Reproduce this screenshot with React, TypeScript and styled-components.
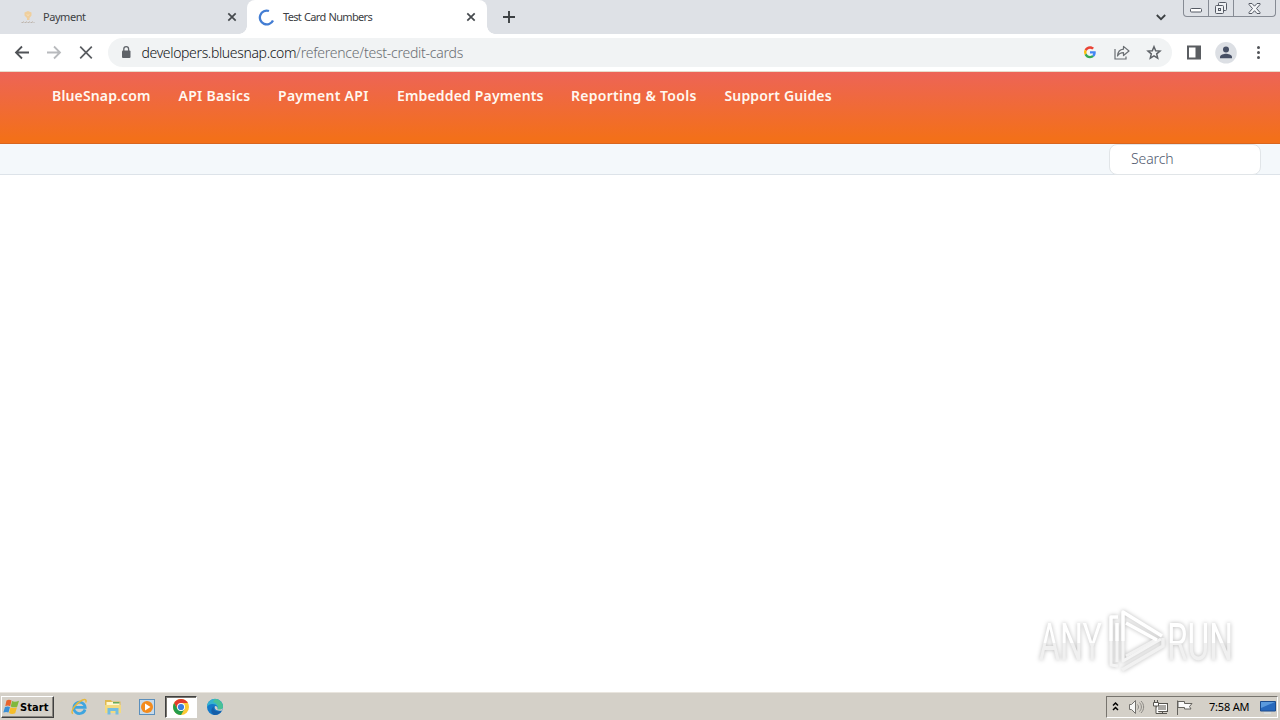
import React from 'react';
import styled, { createGlobalStyle } from 'styled-components';

const GlobalStyle = createGlobalStyle`
  * {
    box-sizing: border-box;
  }
  body {
    margin: 0;
    overflow: hidden;
    background: #fff;
    font-family: 'Noto Sans', 'Open Sans', sans-serif;
  }
  svg {
    display: block;
    flex: none;
  }
`;

const SScreen = styled.div`
  width: 1280px;
  height: 720px;
  display: flex;
  flex-direction: column;
  overflow: hidden;
`;

const STabStrip = styled.div`
  height: 34px;
  display: flex;
  align-items: stretch;
  background: #dee1e6;
`;

const STab = styled.div<{ $active?: boolean }>`
  position: relative;
  width: ${({ $active }) => ($active ? '240px' : '247px')};
  padding: ${({ $active }) => ($active ? '0 11px' : '0 10px 0 20px')};
  display: flex;
  align-items: center;
  border-radius: 8px 8px 0 0;
  background: ${({ $active }) => ($active ? '#fff' : 'transparent')};
  &::before,
  &::after {
    content: '';
    display: ${({ $active }) => ($active ? 'block' : 'none')};
    position: absolute;
    bottom: 0;
    width: 8px;
    height: 8px;
  }
  &::before {
    left: -8px;
    background: radial-gradient(circle at 0 0, transparent 7.5px, #fff 8px);
  }
  &::after {
    right: -8px;
    background: radial-gradient(circle at 100% 0, transparent 7.5px, #fff 8px);
  }
`;

const STabTitle = styled.span<{ $spacing: number; $left: number }>`
  flex: 1;
  margin-left: ${({ $left }) => $left}px;
  font-size: 11px;
  line-height: 16px;
  letter-spacing: ${({ $spacing }) => $spacing}px;
  word-spacing: 0.8px;
  color: #3c4043;
  white-space: nowrap;
`;

const SNewTab = styled.div`
  width: 44px;
  display: flex;
  align-items: center;
  justify-content: center;
`;

const SStripEnd = styled.div`
  margin-left: auto;
  display: flex;
`;

const STabSearch = styled.div`
  width: 28px;
  padding: 14px 0 0 1px;
`;

const SWindowButtons = styled.div`
  display: flex;
  width: 93px;
  height: 17px;
  margin-right: 4px;
  border: 1px solid #868b94;
  border-top: none;
  border-radius: 0 0 4px 4px;
`;

const SWindowButton = styled.div<{ $width: number }>`
  width: ${({ $width }) => $width}px;
  display: flex;
  align-items: center;
  justify-content: center;
  border-right: 1px solid #868b94;
  &:last-child {
    border-right: none;
  }
`;

const SToolbar = styled.div`
  height: 38px;
  display: flex;
  align-items: center;
  padding-left: 14px;
  border-bottom: 1px solid #e8dccb;
  background: #fff;
`;

const SNavIcons = styled.div`
  width: 94px;
  display: flex;
  gap: 16px;
`;

const SOmnibox = styled.div`
  width: 1064px;
  height: 29px;
  display: flex;
  align-items: center;
  padding: 0 9px 0 12px;
  border-radius: 15px;
  background: #f1f3f4;
`;

const SUrl = styled.div`
  flex: 1;
  margin-left: 9.5px;
  font-size: 14px;
  font-weight: 300;
  line-height: 20px;
  color: #6a6e73;
  letter-spacing: -0.24px;
  white-space: nowrap;
`;

const SHost = styled.span`
  letter-spacing: -0.35px;
  color: #111316;
`;

const SOmniboxActions = styled.div`
  display: flex;
  align-items: center;
  gap: 14px;
`;

const SToolbarEnd = styled.div`
  display: flex;
  align-items: center;
  margin-left: 14px;
  gap: 13px;
`;

const SHeader = styled.header`
  height: 72px;
  padding: 14px 0 0 52px;
  background: linear-gradient(#ed6457, #f37019 94%);
  border-bottom: 1px solid #d8661f;
`;

const SHeaderNav = styled.nav`
  display: flex;
`;

const SHeaderLink = styled.a<{ $width: number; $spacing: number }>`
  width: ${({ $width }) => $width}px;
  font-size: 14px;
  font-weight: 600;
  line-height: 20px;
  letter-spacing: ${({ $spacing }) => $spacing}px;
  color: #fff8f0;
  white-space: nowrap;
`;

const SSubHeader = styled.div`
  height: 31px;
  display: flex;
  justify-content: flex-end;
  padding-right: 19px;
  border-bottom: 1px solid #dde3e9;
  background: #f4f8fb;
`;

const SSearch = styled.div`
  width: 152px;
  height: 31px;
  padding: 4px 0 0 21px;
  border: 1px solid #e1e5e8;
  border-radius: 8px;
  background: #fff;
  font-size: 14px;
  font-weight: 300;
  line-height: 20px;
  letter-spacing: -0.1px;
  color: #4f586e;
`;

const SContent = styled.main`
  flex: 1;
  display: flex;
  align-items: flex-end;
  justify-content: flex-end;
  padding: 0 44px 19px 0;
  background: #fff;
`;

const SWatermark = styled.div`
  display: grid;
  grid-template-columns: 68px 60px 69px;
  align-items: center;
  height: 64px;
  filter: drop-shadow(0 0 2px rgba(0, 0, 0, 0.28));
`;

const SWatermarkText = styled.span<{ $scale: number }>`
  width: max-content;
  margin-top: 4px;
  font-family: Roboto, sans-serif;
  font-size: 51px;
  line-height: 60px;
  color: transparent;
  background: linear-gradient(#fff 50%, #f0f0f0 50%);
  background-clip: text;
  white-space: nowrap;
  transform: scaleX(${({ $scale }) => $scale});
  transform-origin: left;
`;

const STaskbar = styled.footer`
  height: 28px;
  display: flex;
  align-items: center;
  padding: 1px 2px 0 1px;
  border-top: 1px solid #e9e5de;
  background: #d4d0c8;
`;

const SStart = styled.button`
  width: 53px;
  height: 22px;
  display: flex;
  align-items: center;
  padding: 0 1px;
  border: 1px solid;
  border-color: #fff #404040 #404040 #fff;
  box-shadow: inset -1px -1px #88857f;
  background: #d4d0c8;
  font-family: 'DejaVu Sans Condensed', 'DejaVu Sans', sans-serif;
  font-size: 11px;
  font-weight: 700;
  letter-spacing: 0.1px;
  color: #000;
`;

const SQuickLaunch = styled.div`
  display: flex;
  margin-left: 8px;
`;

const STask = styled.div<{ $active?: boolean }>`
  width: ${({ $active }) => ($active ? '32px' : '34px')};
  margin: ${({ $active }) => ($active ? '0 1px' : '0')};
  height: 22px;
  display: flex;
  align-items: center;
  justify-content: center;
  border: ${({ $active }) => ($active ? '1px solid' : 'none')};
  border-color: #404040 #fff #fff #404040;
  box-shadow: ${({ $active }) => ($active ? 'inset 1px 1px #77746e' : 'none')};
  background: ${({ $active }) => ($active ? '#fff' : 'transparent')};
`;

const STray = styled.div`
  width: 172px;
  height: 22px;
  display: flex;
  align-items: center;
  margin-left: auto;
  padding: 0 0 0 5px;
  border: 1px solid;
  border-color: #77746e #fff #fff #77746e;
`;

const STrayIcons = styled.div`
  width: 97px;
  display: flex;
  align-items: center;
  gap: 7px;
`;

const SClock = styled.span`
  width: 51px;
  font-size: 11px;
  line-height: 16px;
  letter-spacing: -0.2px;
  color: #000;
  white-space: nowrap;
`;

const CloseIcon = () => (
  <svg width="10" height="10" viewBox="0 0 10 10">
    <path d="M1.3 1.3 8.7 8.7M8.7 1.3 1.3 8.7" stroke="#45494d" strokeWidth="1.7" />
  </svg>
);

const FaviconIcon = () => (
  <svg width="16" height="16" viewBox="0 0 16 16">
    <path d="M4.500 3.500 8 2l3.500 1.500v3L9.500 9v2H7V9L4.500 6.500Z" fill="#efcf9e" />
    <path d="M7 5.500 8 6.500l1-1" stroke="#fae9cd" fill="none" />
    <path d="M1.500 13.500h13" stroke="#bdb5ae" strokeDasharray="2 1" />
    <path d="M3 12.500h10" stroke="#cfc8c2" strokeDasharray="1 2" />
  </svg>
);

const Spinner = () => (
  <svg width="17" height="17" viewBox="0 0 17 17">
    <path
      d="M11 2A6.900 6.900 0 1 0 15 11.500"
      fill="none"
      stroke="#437dd3"
      strokeWidth="2.300"
    />
  </svg>
);

const ArrowIcon = ({
  color,
  flip = false,
}: {
  readonly color: string;
  readonly flip?: boolean;
}) => (
  <svg width="16" height="16" viewBox="0 0 16 16">
    <path
      d="M15 7.500H2M8 1.500l-6 6 6 6"
      fill="none"
      stroke={color}
      strokeWidth="1.800"
      transform={flip ? 'matrix(-1 0 0 1 16 0)' : undefined}
    />
  </svg>
);

const StopIcon = () => (
  <svg width="16" height="16" viewBox="0 0 16 16">
    <path d="m2.2 1.700 11.600 11.600m0-11.600L2.2 13.300" stroke="#5a5d61" strokeWidth="1.700" />
  </svg>
);

const LockIcon = () => (
  <svg width="12" height="14" viewBox="0 0 12 14">
    <rect x="2" y="4.500" width="8.500" height="7.500" rx="1" fill="#5f6368" />
    <path d="M3.800 5.500V3.100a2.400 2.400 0 0 1 4.800 0V5.500" fill="none" stroke="#5f6368" strokeWidth="1.300" />
  </svg>
);

const GoogleIcon = () => (
  <svg width="18" height="18" viewBox="-12 -9 72 72">
    <path fill="#EA4335" d="M24 9.5c3.5 0 6.700 1.200 9.200 3.600l6.900-6.900C35.900 2.400 30.500 0 24 0 14.600 0 6.500 5.400 2.600 13.200l8 6.200C12.400 13.700 17.700 9.500 24 9.500z" />
    <path fill="#4285F4" d="M47 24.600c0-1.600-.2-3.100-.4-4.600H24v9h12.900c-.6 3-2.300 5.500-4.800 7.200l7.700 6C44.400 38 47 32 47 24.600z" />
    <path fill="#FBBC05" d="M10.500 28.600A14.500 14.500 0 0 1 10.500 19.400l-8-6.200a24 24 0 0 0 0 21.600z" />
    <path fill="#34A853" d="M24 48c6.500 0 11.900-2.100 15.900-5.800l-7.700-6c-2.200 1.500-4.900 2.300-8.200 2.300-6.300 0-11.600-4.200-13.500-9.900l-8 6.200C6.500 42.600 14.600 48 24 48z" />
  </svg>
);

const ShareIcon = () => (
  <svg width="18" height="16" viewBox="0 0 18 16">
    <path d="M2 4v10h11v-2.500" fill="none" stroke="#6b6f73" strokeWidth="1.200" />
    <path
      d="M10.500 4.200V1.400L16 6l-5.500 4.500V7.700C7.700 7.700 5.900 8.500 4.500 11c.3-4 2.500-6.500 6-6.800Z"
      fill="none"
      stroke="#6b6f73"
      strokeWidth="1.200"
      strokeLinejoin="round"
    />
  </svg>
);

const StarIcon = () => (
  <svg width="18" height="18" viewBox="0 0 18 18">
    <path
      d="m9 2.700 1.700 4 4.300.4-3.300 2.800 1 4.300L9 11.900l-3.700 2.300 1-4.300L3 7.100l4.300-.4Z"
      fill="none"
      stroke="#5f6368"
      strokeWidth="1.500"
    />
  </svg>
);

const SidePanelIcon = () => (
  <svg width="16" height="16" viewBox="0 0 16 16">
    <path d="M1 .5h14v14H1zM3 2.500v10h6.500v-10z" fill="#5a5d61" fillRule="evenodd" />
  </svg>
);

const AvatarIcon = () => (
  <svg width="22" height="22" viewBox="0 0 22 22">
    <circle cx="11" cy="10.800" r="10.800" fill="#dcdfe4" />
    <circle cx="11" cy="7.500" r="3" fill="#464f64" />
    <path d="M5 16.200v-1.300c0-2 4-3.200 6-3.200s6 1.200 6 3.200v1.300Z" fill="#464f64" />
  </svg>
);

const MenuIcon = () => (
  <svg width="20" height="16" viewBox="0 0 20 16">
    {[2.5, 7.5, 12.5].map((y) => (
      <circle key={y} cx="8.500" cy={y} r="1.500" fill="#505357" />
    ))}
  </svg>
);

const PlayLogo = () => (
  <svg width="60" height="64" viewBox="0 0 60 64">
    <g fill="none" strokeLinejoin="round">
      <path d="M15 61 56 37v-8" stroke="#f1f1f1" strokeWidth="3.500" />
      <path d="M19 47 48 31" stroke="#f1f1f1" strokeWidth="3" />
      <path d="M10 32v21M4 32v24l7 1M16 32v20l38-22" stroke="#f4f4f4" strokeWidth="3" />
      <path d="M11 8H4v24M10 14v18M16 32V3l39 24M19 14l31 17" stroke="#fff" strokeWidth="3.500" />
    </g>
  </svg>
);

const WindowsIcon = () => (
  <svg width="17" height="17" viewBox="0 0 17 17">
    <path d="M3.500 1.500c2-1 3.500-.8 5 .1L7.200 7.200c-1.600-.9-3-.9-4.900-.1Z" fill="#e8632c" />
    <path d="M9.100 2c1.800 1 3.900 1 6.900-.3l-1.800 6c-2.400.9-4.400.9-6.500-.3Z" fill="#80b83d" />
    <path d="M2 8c2-.8 3.500-.8 5 .1l-1.500 5.500c-1.500-.9-3-.9-5.200 0Z" fill="#398fd6" />
    <path d="M7.500 8.300c1.800 1 4 1 6.500 0l-1.800 6c-2.300 1-4.400.9-6.200-.3Z" fill="#f5bd2a" />
  </svg>
);

const ExplorerIcon = () => (
  <svg width="18" height="18" viewBox="0 0 18 18">
    <path
      d="M15 11.500A5.700 5.700 0 1 1 15.200 9.300H5"
      fill="none"
      stroke="#3fa5df"
      strokeWidth="2.700"
    />
    <path d="M2.800 15.800C-.2 13 6.500 4.500 12.500 2c3-1.200 4.300 0 3.200 2.500" fill="none" stroke="#e6b83c" strokeWidth="1.400" />
  </svg>
);

const FolderIcon = () => (
  <svg width="18" height="18" viewBox="0 0 18 18">
    <path d="M1 2h6l1 1.500h8.500V15H1Z" fill="#dfb950" />
    <path d="M2.500 4h13v4h-13Z" fill="#fff7cf" />
    <path d="M9 4h6.500v1.500H9Z" fill="#67a95b" />
    <path d="M1 7h16v8H1Z" fill="#f3da80" />
    <path d="M3.500 16.500V10h11v6.500h-3V13h-5v3.500Z" fill="#74bde0" />
  </svg>
);

const MediaIcon = () => (
  <svg width="16" height="16" viewBox="0 0 16 16">
    <rect x=".5" y=".5" width="15" height="15" fill="#c7daea" stroke="#5b8fbc" />
    <circle cx="8" cy="8" r="6" fill="#f38b1d" />
    <path d="M6 4.500 11.500 8 6 11.500Z" fill="#fff" />
  </svg>
);

const ChromeIcon = () => (
  <svg width="16" height="16" viewBox="0 0 16 16">
    <circle cx="8" cy="8" r="8" fill="#fcc934" />
    <path d="M1.100 4A8 8 0 0 1 14.900 4H8L4.500 10Z" fill="#e33b2e" />
    <path d="M1.100 4A8 8 0 0 0 8 16l3.500-6h-7Z" fill="#249c4b" />
    <circle cx="8" cy="8" r="4" fill="#fff" />
    <circle cx="8" cy="8" r="3.100" fill="#3b7de0" />
  </svg>
);

const EdgeIcon = () => (
  <svg width="18" height="18" viewBox="0 0 18 18">
    <circle cx="9" cy="9" r="8" fill="#1479c9" />
    <path d="M1 9a8 8 0 0 1 16-.5c0 3-2.500 3.800-5.500 3.200C13 9 10 5.800 6.500 6 4 6 2 7 1 9Z" fill="#35b3cf" />
    <path d="M9 1a8 8 0 0 1 8 7.500c0 3-2.500 3.800-5.500 3.200C13 8 11 5 7 4Z" fill="#55c978" opacity=".65" />
    <path d="M8 8.500c-1.500 3 1.500 6 7.500 4.500-2 3.500-5 4-7.500 4-3-1.500-4-6.500 0-8.500Z" fill="#155da8" />
    <path d="M9 8c-1.200 3 1.500 5.500 7 4.500l1-2.500c-1.500 1.500-4 2-5.500 1.200.6-1.700-.5-3.200-2.500-3.200Z" fill="#d4d0c8" />
  </svg>
);

const TrayChevrons = () => (
  <svg width="8" height="12" viewBox="0 0 8 12">
    <path d="m1 4.500 2.500-2.500L6 4.500M1 9l2.500-2.500L6 9" fill="none" stroke="#000" strokeWidth="1.500" />
  </svg>
);

const VolumeIcon = () => (
  <svg width="18" height="16" viewBox="0 0 18 16">
    <path d="M2.500 5.500h2l4-4v13l-4-4h-2Z" fill="#f7f7f5" stroke="#73716d" />
    <path d="M10.500 5.500c1.300 1.500 1.300 3.500 0 5M12.500 3.500c2.500 2.700 2.500 6.300 0 9M14 2c3.500 3.500 3.500 8.500 0 12" fill="none" stroke="#8b8984" />
  </svg>
);

const NetworkIcon = () => (
  <svg width="17" height="17" viewBox="0 0 17 17">
    <rect x="4.500" y="4.500" width="11" height="8" fill="#aaa8a4" stroke="#56544f" />
    <path d="M5.500 5.500h9v6h-9z" fill="none" stroke="#fff" />
    <path d="M6 14.500h9M10.500 13v2" stroke="#56544f" />
    <path d="M1.500 3.500h5V7h-5zM2.500 1v2M5.500 1v2M4 7v7.500h3" fill="#fff" stroke="#56544f" />
  </svg>
);

const FlagIcon = () => (
  <svg width="17" height="17" viewBox="0 0 17 17">
    <path d="M1.500 16V1.500M2 2.500h6.500v2H16l-2.500 3 1.500 2.500H8.500V8.500H2Z" fill="#fafafa" stroke="#65635e" />
  </svg>
);

const DesktopIcon = () => (
  <svg width="16" height="16" viewBox="0 0 16 16">
    <path d="M.5 2.500h15V12H.5Z" fill="#2869bd" stroke="#1c4c8e" />
    <path d="M1 3h14L1 9Z" fill="#5b9add" />
    <path d="M4 14h7" stroke="#dce7ef" />
  </svg>
);

const headerLinks = [
  { label: 'BlueSnap.com', width: 126.5, spacing: 0.15 },
  { label: 'API Basics', width: 99.5, spacing: 0.3 },
  { label: 'Payment API', width: 119, spacing: 0.28 },
  { label: 'Embedded Payments', width: 174, spacing: 0.16 },
  { label: 'Reporting & Tools', width: 153.5, spacing: 0.28 },
  { label: 'Support Guides', width: 110, spacing: 0.15 },
];

const BrowserTabs = () => (
  <STabStrip>
    <STab>
      <FaviconIcon />
      <STabTitle $spacing={-0.45} $left={7}>
        Payment
      </STabTitle>
      <CloseIcon />
    </STab>
    <STab $active>
      <Spinner />
      <STabTitle $spacing={-0.68} $left={8}>
        Test Card Numbers
      </STabTitle>
      <CloseIcon />
    </STab>
    <SNewTab>
      <svg width="14" height="14" viewBox="0 0 14 14">
        <path d="M7 1v12M1 7h12" stroke="#3c4043" strokeWidth="1.900" />
      </svg>
    </SNewTab>
    <SStripEnd>
      <STabSearch>
        <svg width="10" height="7" viewBox="0 0 10 7">
          <path d="m.8 1 4.200 4.200L9.200 1" fill="none" stroke="#3c4043" strokeWidth="1.800" />
        </svg>
      </STabSearch>
      <SWindowButtons>
        <SWindowButton $width={25}>
          <svg width="13" height="15" viewBox="0 0 13 15">
            <rect x=".5" y="7.500" width="11" height="3.500" rx="1" fill="#fff" stroke="#555a64" />
          </svg>
        </SWindowButton>
        <SWindowButton $width={25}>
          <svg width="13" height="14" viewBox="0 0 13 14">
            <g fill="#eef0f3" stroke="#555a64">
              <rect x="3.500" y="1.500" width="8" height="8" rx="1" />
              <rect x=".5" y="4.500" width="8" height="8" rx="1" />
              <rect x="3.500" y="7.500" width="2" height="2" />
            </g>
          </svg>
        </SWindowButton>
        <SWindowButton $width={41}>
          <svg width="13" height="11" viewBox="0 0 13 11">
            <path
              d="M1 .5h3l2.500 2.700L9 .5h3v1L8.500 5.500 12 9.500v1H9L6.500 7.700 4 10.500H1v-1l3.500-4L1 1.500Z"
              fill="#f5f6f8"
              stroke="#555a64"
            />
          </svg>
        </SWindowButton>
      </SWindowButtons>
    </SStripEnd>
  </STabStrip>
);

const BrowserToolbar = () => (
  <SToolbar>
    <SNavIcons>
      <ArrowIcon color="#505357" />
      <ArrowIcon color="#b8babd" flip />
      <StopIcon />
    </SNavIcons>
    <SOmnibox>
      <LockIcon />
      <SUrl>
        <SHost>developers.bluesnap.com</SHost>/reference/test-credit-cards
      </SUrl>
      <SOmniboxActions>
        <GoogleIcon />
        <ShareIcon />
        <StarIcon />
      </SOmniboxActions>
    </SOmnibox>
    <SToolbarEnd>
      <SidePanelIcon />
      <AvatarIcon />
      <MenuIcon />
    </SToolbarEnd>
  </SToolbar>
);

const Taskbar = () => (
  <STaskbar>
    <SStart>
      <WindowsIcon />
      Start
    </SStart>
    <SQuickLaunch>
      <STask>
        <ExplorerIcon />
      </STask>
      <STask>
        <FolderIcon />
      </STask>
      <STask>
        <MediaIcon />
      </STask>
      <STask $active>
        <ChromeIcon />
      </STask>
      <STask>
        <EdgeIcon />
      </STask>
    </SQuickLaunch>
    <STray>
      <STrayIcons>
        <TrayChevrons />
        <VolumeIcon />
        <NetworkIcon />
        <FlagIcon />
      </STrayIcons>
      <SClock>7:58 AM</SClock>
      <DesktopIcon />
    </STray>
  </STaskbar>
);

export default function App(): React.JSX.Element {
  return (
    <SScreen>
      <GlobalStyle />
      <BrowserTabs />
      <BrowserToolbar />
      <SHeader>
        <SHeaderNav>
          {headerLinks.map(({ label, width, spacing }) => (
            <SHeaderLink key={label} $width={width} $spacing={spacing}>
              {label}
            </SHeaderLink>
          ))}
        </SHeaderNav>
      </SHeader>
      <SSubHeader>
        <SSearch>Search</SSearch>
      </SSubHeader>
      <SContent>
        <SWatermark>
          <SWatermarkText $scale={0.63}>ANY</SWatermarkText>
          <PlayLogo />
          <SWatermarkText $scale={0.655}>RUN</SWatermarkText>
        </SWatermark>
      </SContent>
      <Taskbar />
    </SScreen>
  );
}
